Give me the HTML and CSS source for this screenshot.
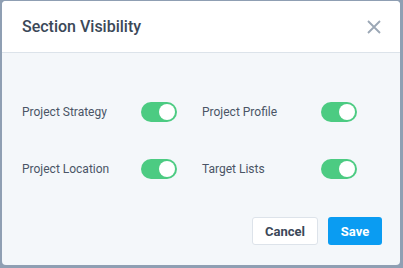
FILE: index.html
```html
<!DOCTYPE html>
<html lang="en">
<head>
    <meta charset="UTF-8">
    <title>Section Visibility</title>
    <link rel="stylesheet" href="styles.css">
</head>
<body>
    <div class="modal">
        <div class="modal-header">
            <h2>Section Visibility</h2>
            <button class="close-btn" aria-label="Close">
                <svg width="14" height="14" viewBox="0 0 14 14">
                    <path d="M1 1L13 13M13 1L1 13" stroke="#9ba7b5" stroke-width="1.8" fill="none"/>
                </svg>
            </button>
        </div>
        <div class="modal-body">
            <div class="options">
                <label class="option">
                    <span class="option-name">Project Strategy</span>
                    <span class="toggle on"></span>
                </label>
                <label class="option">
                    <span class="option-name">Project Profile</span>
                    <span class="toggle on"></span>
                </label>
                <label class="option">
                    <span class="option-name">Project Location</span>
                    <span class="toggle on"></span>
                </label>
                <label class="option">
                    <span class="option-name">Target Lists</span>
                    <span class="toggle on"></span>
                </label>
            </div>
            <div class="actions">
                <button class="btn cancel">Cancel</button>
                <button class="btn save">Save</button>
            </div>
        </div>
    </div>
</body>
</html>
```

FILE: styles.css
```css
*{
    box-sizing: border-box;
}
body{
    margin: 0;
    background-color: #8f9fb3;
    font-family: Roboto, "Liberation Sans", sans-serif;
    height: 268px;
    overflow: hidden;
}
.modal{
    margin: 1px 0 0 2px;
    width: 398px;
    height: 264px;
    border-radius: 4px;
    overflow: hidden;
    background-color: #f4f7fa;
    display: flex;
    flex-direction: column;
}
.modal-header{
    height: 52px;
    background-color: #fff;
    border-bottom: 1px solid #dce3ea;
    display: flex;
    align-items: center;
    justify-content: space-between;
    padding: 0 18px 0 20px;
}
h2{
    margin: 0;
    font-size: 16px;
    font-weight: 500;
    color: #3b4858;
}
.close-btn{
    border: 0;
    background: none;
    padding: 0;
    width: 14px;
    height: 14px;
    margin-right: 1px;
    display: flex;
}
.modal-body{
    flex: 1;
    padding: 49px 18px 0 20px;
    display: flex;
    flex-direction: column;
}
.options{
    display: grid;
    grid-template-columns: 180px 180px;
    row-gap: 37px;
}
.option{
    display: flex;
    align-items: center;
    height: 20px;
}
.option-name{
    width: 119px;
    font-size: 12px;
    color: #4a5566;
    margin-top: -1px;
}
.toggle{
    position: relative;
    width: 36px;
    height: 20px;
    border-radius: 10px;
    background-color: #4ccb82;
}
.toggle::after{
    content: '';
    position: absolute;
    top: 2px;
    right: 2px;
    width: 16px;
    height: 16px;
    border-radius: 50%;
    background-color: #fff;
}
.actions{
    margin-top: 38px;
    display: flex;
    justify-content: flex-end;
    gap: 10px;
}
.btn{
    height: 28px;
    border-radius: 3px;
    font-family: Roboto, "Liberation Sans", sans-serif;
    font-size: 13px;
    font-weight: 700;
    padding: 0;
}
.cancel{
    width: 66px;
    background-color: #fff;
    border: 1px solid #dde3ea;
    color: #3b4858;
}
.save{
    width: 54px;
    background-color: #0a9cf2;
    border: 0;
    color: #fff;
}
```
